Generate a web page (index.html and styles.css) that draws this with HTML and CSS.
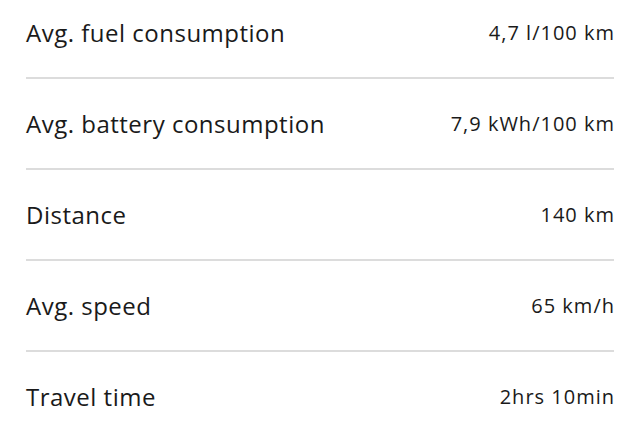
FILE: index.html
```html
<!DOCTYPE html>
<html>
<head>
<meta charset="utf-8">
<link rel="stylesheet" href="styles.css">
</head>
<body>
<ul class="stats">
  <li class="row"><span class="label">Avg. fuel consumption</span><span class="value">4,7 l/100 km</span></li>
  <li class="row"><span class="label">Avg. battery consumption</span><span class="value">7,9 kWh/100 km</span></li>
  <li class="row"><span class="label">Distance</span><span class="value">140 km</span></li>
  <li class="row"><span class="label">Avg. speed</span><span class="value">65 km/h</span></li>
  <li class="row"><span class="label">Travel time</span><span class="value">2hrs 10min</span></li>
</ul>
</body>
</html>
```
FILE: styles.css
```css
html, body {
  margin: 0;
  padding: 0;
  background: #fff;
  overflow: hidden;
}
body {
  font-family: "Open Sans", "Liberation Sans", sans-serif;
  color: #1a1a1a;
}
.stats {
  list-style: none;
  margin: -12px 26px 0 26px;
  padding: 0;
}
.row {
  display: flex;
  justify-content: space-between;
  align-items: center;
  height: 89px;
  border-bottom: 2px solid #dcdcdc;
}
.label {
  font-size: 24px;
  font-weight: 500;
  letter-spacing: 0.5px;
}
.value {
  font-size: 20px;
  font-weight: 500;
  letter-spacing: 1px;
  margin-right: -1px;
}
```
